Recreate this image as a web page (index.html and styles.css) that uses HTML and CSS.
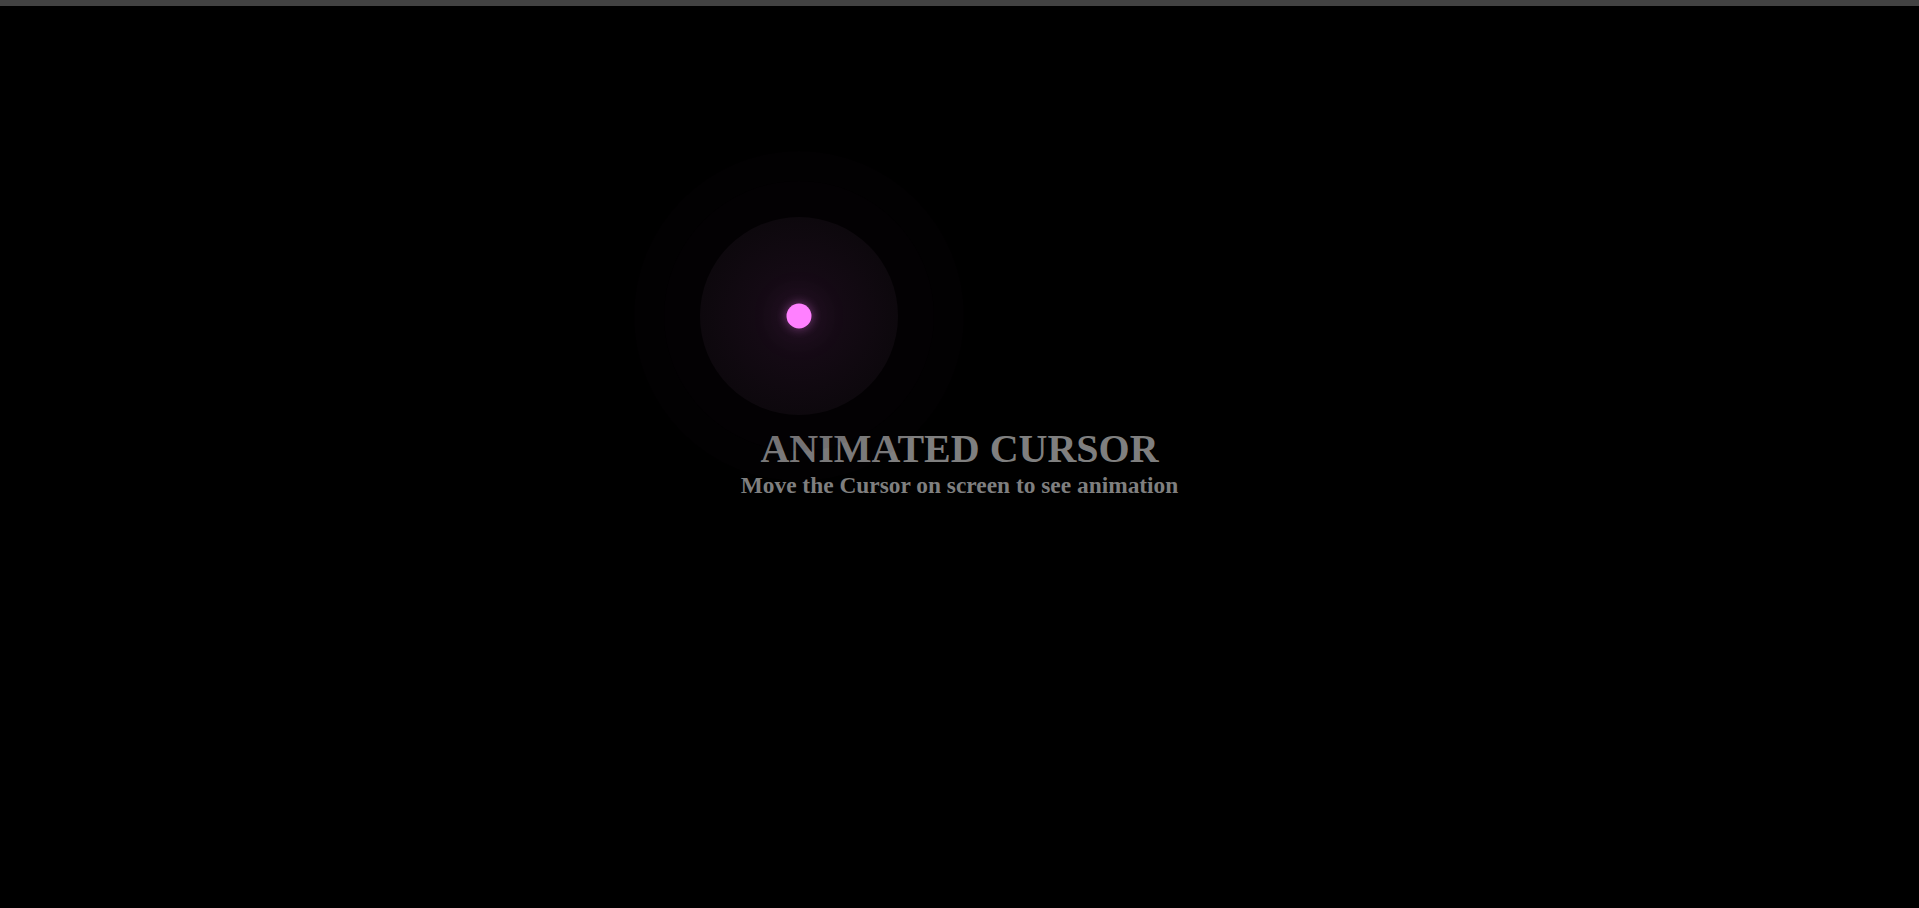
FILE: index.html
```html
<!DOCTYPE html>
<html lang="en">
<head>
<meta charset="utf-8">
<title>Animated Cursor</title>
<link rel="stylesheet" href="styles.css">
</head>
<body>
<div class="topbar"></div>
<main class="stage">
  <h1 class="title">ANIMATED CURSOR</h1>
  <p class="subtitle">Move the Cursor on screen to see animation</p>
</main>
<div class="cursor">
  <span class="ring ring-3"></span>
  <span class="ring ring-2"></span>
  <span class="ring ring-1"></span>
  <span class="dot"></span>
</div>
</body>
</html>
```

FILE: styles.css
```css
html, body {
  margin: 0;
  padding: 0;
  background: #000;
  height: 100%;
  overflow: hidden;
}

body {
  font-family: "Liberation Serif", "Times New Roman", serif;
  color: #808080;
}

.topbar {
  height: 6px;
  background: #424242;
}

.stage {
  padding-top: 421px;
  text-align: center;
}

.title {
  margin: 0;
  font-size: 40px;
  line-height: 44px;
  font-weight: bold;
  color: #7f7f7f;
}

.subtitle {
  margin: 0;
  font-size: 23.4px;
  line-height: 28px;
  font-weight: bold;
  color: #7f7f7f;
}

.cursor {
  position: absolute;
  left: 799px;
  top: 316px;
  width: 0;
  height: 0;
}

.ring,
.dot {
  position: absolute;
  border-radius: 50%;
  transform: translate(-50%, -50%);
  left: 0;
  top: 0;
}

.ring-3 {
  width: 330px;
  height: 330px;
  background: rgba(30, 20, 30, 0.05);
}

.ring-2 {
  width: 270px;
  height: 270px;
  background: rgba(30, 20, 30, 0.06);
}

.ring-1 {
  width: 198px;
  height: 198px;
  background: radial-gradient(circle, #1e0f1e 0%, #140a14 30%, #0d080d 70%, #0a070a 100%);
}

.dot {
  width: 25px;
  height: 25px;
  background: #ff80ff;
  box-shadow: 0 0 8px 2px rgba(255, 128, 255, 0.25), 0 0 40px 10px rgba(255, 128, 255, 0.05);
}
```
